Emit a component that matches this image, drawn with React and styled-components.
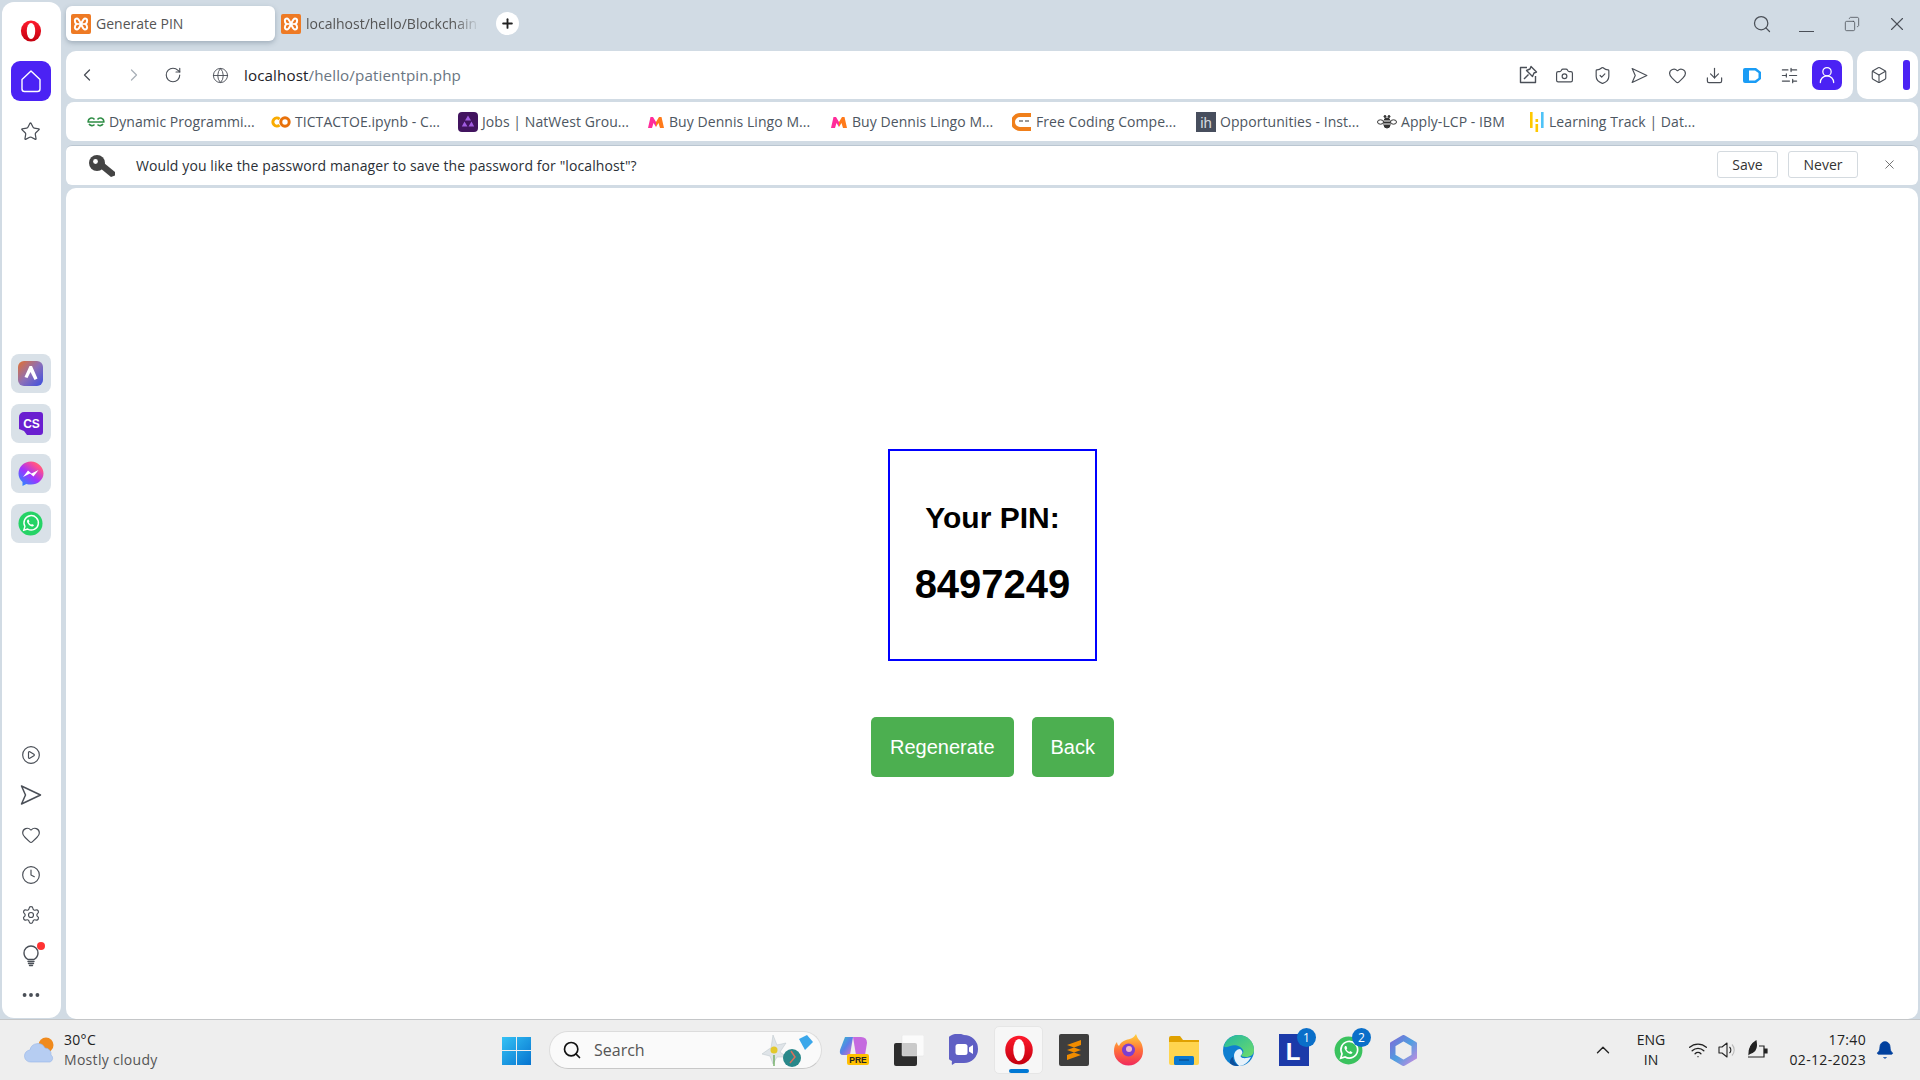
import React from 'react';
import styled, { createGlobalStyle } from 'styled-components';
import {
  Star, CirclePlay, Heart, Clock, Settings, Ellipsis, Search, X, ChevronLeft, ChevronRight,
  RotateCw, Globe, Camera, ShieldCheck, Download, SlidersHorizontal, Box, UserRound, Wifi,
  ChevronUp, Bell, Plus, Copy,
} from 'lucide-react';

const GlobalStyle = createGlobalStyle`
  html, body { margin: 0; padding: 0; }
  body { width: 1920px; height: 1080px; overflow: hidden; font-family: "Open Sans", "Liberation Sans", sans-serif; }
`;

const Screen = styled.div`
  width: 1920px;
  height: 1080px;
  display: flex;
  flex-direction: column;
  background: #d1dbe4;
`;

const Upper = styled.div`
  height: 1019px;
  display: flex;
  flex: none;
`;

const Sidebar = styled.aside`
  width: 59px;
  height: 1016px;
  margin: 2px 5px 0 2px;
  padding-right: 2px;
  box-sizing: border-box;
  background: #fff;
  border-radius: 12px;
  display: flex;
  flex-direction: column;
  align-items: center;
  flex: none;
`;

const LogoSlot = styled.div`
  height: 40px;
  margin-top: 9px;
  margin-bottom: 10px;
  display: flex;
  align-items: center;
`;

const HomeButton = styled.div`
  width: 40px;
  height: 40px;
  border-radius: 9px;
  background: #4b22f4;
  display: flex;
  align-items: center;
  justify-content: center;
  flex: none;
`;

const SideIcon = styled.div`
  height: 40px;
  margin-top: ${p => p.$mt || 0}px;
  display: flex;
  align-items: center;
  justify-content: center;
  color: #4a4f57;
  flex: none;
  position: relative;
`;

const Tiles = styled.div`
  margin-top: 203px;
  display: flex;
  flex-direction: column;
  gap: 11px;
`;

const Tile = styled.div`
  width: 40px;
  height: 39px;
  border-radius: 8px;
  background: #d9e1e8;
  display: flex;
  align-items: center;
  justify-content: center;
`;

const BottomIcons = styled.div`
  margin-top: 192px;
  display: flex;
  flex-direction: column;
`;

const RedDot = styled.span`
  position: absolute;
  top: 7px;
  right: -3px;
  width: 8px;
  height: 8px;
  border-radius: 50%;
  background: #f33;
`;

const Main = styled.main`
  flex: 1;
  min-width: 0;
  display: flex;
  flex-direction: column;
  padding-right: 2px;
`;

const TabStrip = styled.div`
  height: 51px;
  display: flex;
  align-items: flex-start;
  flex: none;
`;

const Tab = styled.div`
  width: ${p => p.$w}px;
  height: 35px;
  margin-top: 6px;
  margin-right: ${p => p.$gap || 0}px;
  padding-left: ${p => p.$pad}px;
  box-sizing: border-box;
  display: flex;
  align-items: center;
  gap: 5px;
  font-size: 14px;
  color: #555;
  background: ${p => (p.$active ? '#fff' : 'transparent')};
  border-radius: 6px;
  box-shadow: ${p => (p.$active ? '0 2px 5px rgba(70,90,110,.35)' : 'none')};
  flex: none;
`;

const TabTitle = styled.span`
  white-space: nowrap;
  overflow: hidden;
  flex: 1;
  ${p => p.$fade && 'mask-image: linear-gradient(to right, #000 85%, transparent 100%);'}
`;

const NewTab = styled.div`
  width: 23px;
  height: 23px;
  margin: 12px 0 0 16px;
  border-radius: 50%;
  background: #fff;
  color: #222;
  display: flex;
  align-items: center;
  justify-content: center;
  flex: none;
`;

const WindowControls = styled.div`
  margin-left: auto;
  margin-right: -1px;
  height: 48px;
  display: flex;
  align-items: center;
  color: #4a4f57;
`;

const WinControl = styled.div`
  width: ${p => p.$w}px;
  display: flex;
  justify-content: center;
`;

const MinimizeLine = styled.span`
  width: 15px;
  height: 1px;
  margin-top: 14px;
  background: #4a4f57;
`;

const RestoreIcon = styled.span`
  display: flex;
  transform: scaleX(-1);
`;

const ToolRow = styled.div`
  height: 48px;
  display: flex;
  gap: 4px;
  flex: none;
`;

const AddressBar = styled.div`
  flex: 1;
  background: #fff;
  border-radius: 10px;
  display: flex;
  align-items: center;
  padding-right: 11px;
  color: #4a4f57;
`;

const NavBtn = styled.div`
  width: ${p => p.$w}px;
  margin-left: ${p => p.$ml || 0}px;
  flex: none;
  display: flex;
  justify-content: center;
  color: ${p => (p.$dim ? '#a9b0b8' : '#4a4f57')};
`;

const Url = styled.div`
  font-size: 15.2px;
  color: #6a7682;
  letter-spacing: 0.1px;
  white-space: nowrap;
  b { font-weight: 400; color: #1e2227; }
`;

const ToolIcons = styled.div`
  margin-left: auto;
  display: flex;
  align-items: center;
`;

const ToolBtn = styled.div`
  width: 37.4px;
  display: flex;
  justify-content: center;
`;

const ProfileBtn = styled.div`
  width: 30px;
  height: 30px;
  margin-left: 4px;
  border-radius: 7px;
  background: #4b22f4;
  display: flex;
  align-items: center;
  justify-content: center;
  color: #fff;
`;

const PinBox = styled.div`
  width: 61px;
  background: #fff;
  border-radius: 10px;
  display: flex;
  align-items: center;
  padding-left: 13px;
  box-sizing: border-box;
  color: #4a4f57;
  flex: none;
`;

const BlueBar = styled.span`
  width: 7px;
  height: 30px;
  border-radius: 3px;
  background: #4b22f4;
  margin-left: 15px;
`;

const BookmarksBar = styled.div`
  height: 39px;
  margin-top: 3px;
  background: #fff;
  border-radius: 8px;
  display: flex;
  align-items: center;
  padding-left: 20px;
  flex: none;
`;

const Bookmark = styled.div`
  width: ${p => p.$w}px;
  flex: none;
  display: flex;
  align-items: center;
  font-size: 14px;
  color: #4d5661;
  white-space: nowrap;
`;

const BookmarkIcon = styled.span`
  width: ${p => p.$w}px;
  display: flex;
  justify-content: center;
  flex: none;
  margin-right: 3px;
`;

const BookmarkText = styled.span`
  letter-spacing: 0.06px;
`;

const InfoBar = styled.div`
  height: 40px;
  margin-top: 4px;
  background: #fff;
  border-top: 1px solid #bac6d1;
  box-sizing: border-box;
  border-radius: 6px;
  display: flex;
  align-items: center;
  padding-left: 23px;
  font-size: 14px;
  color: #2a2f36;
  flex: none;
`;

const InfoText = styled.span`
  margin-left: 21px;
  letter-spacing: 0.1px;
`;

const InfoButton = styled.button`
  height: 27px;
  width: ${p => p.$w}px;
  margin-left: ${p => p.$ml};
  margin-bottom: 2px;
  padding: 0;
  background: #fff;
  border: 1px solid #d4dadf;
  border-radius: 3px;
  font: inherit;
  font-size: 14px;
  color: #333;
`;

const CloseInfo = styled.div`
  margin: 0 21px 2px 24px;
  color: #555;
  display: flex;
`;

const Page = styled.div`
  flex: 1;
  margin-top: 3px;
  background: #fff;
  border-radius: 10px;
  display: flex;
  flex-direction: column;
  align-items: center;
  padding: 261px 0 0 1px;
  font-family: "Liberation Sans", Arial, sans-serif;
`;

const PinCard = styled.div`
  width: 209px;
  height: 212px;
  box-sizing: border-box;
  border: 2px solid #0000ff;
  display: flex;
  flex-direction: column;
  align-items: center;
  color: #000;
  font-weight: 700;
`;

const PinLabel = styled.div`
  margin-top: 50px;
  font-size: 30px;
  line-height: 34px;
`;

const PinValue = styled.div`
  margin-top: 26px;
  font-size: 40px;
  line-height: 46px;
`;

const ButtonRow = styled.div`
  margin-top: 56px;
  display: flex;
  gap: 18px;
`;

const GreenButton = styled.button`
  height: 60px;
  padding: 0 19px;
  background: #4caf50;
  color: #fff;
  border: 0;
  border-radius: 5px;
  font: inherit;
  font-size: 20px;
`;

const Taskbar = styled.footer`
  height: 61px;
  flex: none;
  background: #eeeeee;
  border-top: 1px solid #c4c6c8;
  box-sizing: border-box;
  display: flex;
  align-items: center;
  font-size: 14px;
  color: #222;
`;

const Weather = styled.div`
  width: 502px;
  flex: none;
  box-sizing: border-box;
  padding-left: 24px;
  display: flex;
  align-items: center;
  gap: 8px;
`;

const WeatherText = styled.div`
  line-height: 20px;
  letter-spacing: 0.3px;
  div + div { color: #555; }
`;

const StartSlot = styled.div`
  flex: none;
  display: flex;
`;

const SearchBox = styled.div`
  width: 273px;
  height: 38px;
  margin-left: 18px;
  box-sizing: border-box;
  background: #fafafa;
  border: 1px solid #dcdcdc;
  border-bottom-color: #c8c8c8;
  border-radius: 19px;
  display: flex;
  align-items: center;
  padding-left: 12px;
  font-size: 16px;
  color: #555;
  flex: none;
`;

const SearchLabel = styled.span`
  margin-left: 12px;
`;

const SearchArt = styled.span`
  margin-left: auto;
  margin-right: 4px;
  display: flex;
`;

const Pinned = styled.div`
  margin-left: 4px;
  display: flex;
  flex: none;
`;

const PinnedApp = styled.div`
  width: 55px;
  height: 48px;
  display: flex;
  align-items: center;
  justify-content: center;
  position: relative;
  box-sizing: border-box;
  ${p => p.$active && 'background: #f7f7f7; border: 1px solid #e6e6e6; border-radius: 5px; width: 49px; margin: 0 3px;'}
`;

const RunIndicator = styled.span`
  position: absolute;
  bottom: 0;
  left: 14px;
  width: 20px;
  height: 4px;
  border-radius: 2px;
  background: #0078d4;
`;

const CountBadge = styled.span`
  position: absolute;
  top: 2px;
  right: 5px;
  width: 19px;
  height: 19px;
  border-radius: 50%;
  background: #0a6fc9;
  color: #fff;
  font-size: 12px;
  line-height: 19px;
  text-align: center;
`;

const Tray = styled.div`
  margin-left: auto;
  display: flex;
  align-items: center;
  padding-right: 16px;
`;

const TrayIcon = styled.div`
  width: ${p => p.$w}px;
  display: flex;
  justify-content: center;
  color: #222;
`;

const Lang = styled.div`
  width: 50px;
  margin: 0 7px 0 8px;
  text-align: center;
  line-height: 20px;
`;

const Clocks = styled.div`
  width: 93px;
  text-align: right;
  line-height: 20px;
  letter-spacing: 0.35px;
`;

const BellSlot = styled.div`
  width: 38px;
  display: flex;
  justify-content: center;
  color: #00409e;
`;

const OperaLogo = ({ size = 22 }) => (
  <svg width={size} height={size} viewBox="0 0 24 24">
    <defs>
      <linearGradient id="operaRed" x1="0" y1="0" x2="0" y2="1">
        <stop offset="0" stopColor="#ff1b2d" />
        <stop offset="1" stopColor="#c3000f" />
      </linearGradient>
    </defs>
    <ellipse cx="12" cy="12" rx="11" ry="11.5" fill="url(#operaRed)" />
    <ellipse cx="12" cy="12" rx="4.6" ry="8.8" fill="#fff" />
  </svg>
);

const XamppIcon = () => (
  <svg width="20" height="20" viewBox="0 0 20 20">
    <rect width="20" height="20" rx="2" fill="#ee7a24" />
    <path d="M6 4.5c-2.5 0-3 3.5-.5 5.5C3 12 3.500 15.500 6 15.500c2 0 2.500-3 4-5.500 1.500 2.500 2 5.500 4 5.500 2.500 0 3-3.500.5-5.500 2.500-2 2-5.500-.5-5.500-2 0-2.500 3-4 5.500C8.500 7.500 8 4.500 6 4.500z" fill="none" stroke="#fff" strokeWidth="2" />
    <path d="M6 10h8" stroke="#fff" strokeWidth="1.600" />
  </svg>
);

const HomeGlyph = () => (
  <svg width="22" height="24" viewBox="0 0 22 24" fill="none" stroke="#fff" strokeWidth="1.400">
    <path d="M2 10.500 11 2l9 8.500V20a2.500 2.500 0 0 1-2.500 2.500h-13A2.500 2.500 0 0 1 2 20z" strokeLinejoin="round" />
  </svg>
);

const SendGlyph = ({ size = 20 }) => (
  <svg width={size} height={size} viewBox="0 0 22 22" fill="none" stroke="currentColor" strokeWidth="1.500" strokeLinejoin="round">
    <path d="M1.500 2 20.500 11 1.500 20 5.500 11z" />
  </svg>
);

const PinNoteGlyph = () => (
  <svg width="20" height="20" viewBox="0 0 20 20" fill="none" stroke="currentColor" strokeWidth="1.400" strokeLinejoin="round">
    <path d="M9 2.500H2.500v15h15V11" />
    <path d="M13 1.500 18.500 7l-2.500 1-1.500 3.500-6-6L12 4z" />
    <path d="M10.500 9.500 6 14" />
  </svg>
);

const BulbGlyph = () => (
  <svg width="20" height="24" viewBox="0 0 20 24" fill="none" stroke="currentColor" strokeWidth="1.400" strokeLinecap="round">
    <path d="M7 16.500C4.500 15 3 13 3 10a7 7 0 0 1 14 0c0 3-1.500 5-4 6.500z" />
    <path d="M7 18.500h6M7.500 20.500h5M8.500 22.500h3" />
  </svg>
);

const ArcTile = () => (
  <svg width="25" height="25" viewBox="0 0 25 25">
    <defs>
      <linearGradient id="arcBg" x1="0" y1="0" x2="1" y2="1">
        <stop offset="0" stopColor="#e3702f" />
        <stop offset=".5" stopColor="#8c6fb8" />
        <stop offset="1" stopColor="#3b4fe0" />
      </linearGradient>
    </defs>
    <rect width="25" height="25" rx="6" fill="url(#arcBg)" />
    <path d="M11.500 5 6.500 16l3 1 3-6 4 8 3-1.500L14 5z" fill="#fff" />
  </svg>
);

const CsTile = () => (
  <svg width="26" height="26" viewBox="0 0 26 26">
    <path d="M6 1h16a3 3 0 0 1 3 3v17a3 3 0 0 1-3 3H9l-3-4-5-2V6a5 5 0 0 1 5-5z" fill="#6a1fd0" />
    <text x="13.500" y="17" fontFamily="Liberation Sans" fontWeight="700" fontSize="12" fill="#fff" textAnchor="middle">CS</text>
  </svg>
);

const MessengerTile = () => (
  <svg width="26" height="26" viewBox="0 0 26 26">
    <defs>
      <linearGradient id="msgr" x1="0.100" y1="1" x2="0.900" y2="0">
        <stop offset="0" stopColor="#1e90ff" />
        <stop offset=".45" stopColor="#a033ff" />
        <stop offset=".8" stopColor="#ff4f8f" />
        <stop offset="1" stopColor="#ff7a59" />
      </linearGradient>
    </defs>
    <path d="M13 .5C6 .5 .5 5.700 .5 12.400c0 3.500 1.500 6.500 4 8.600V25l3.800-2.100c1.500.4 3 .6 4.700.6 7 0 12.500-5.200 12.500-11.100S20 .5 13 .5z" fill="url(#msgr)" />
    <path d="M5 16 10 9.500l3.500 3 7-3.500-5 6.500-3.500-3z" fill="#fff" />
  </svg>
);

const WhatsappGlyph = ({ size = 25, fill = '#25d366' }) => (
  <svg width={size} height={size} viewBox="0 0 26 26">
    <circle cx="13" cy="13" r="12.500" fill={fill} />
    <path d="M6 20l1.200-4a7.500 7.500 0 1 1 2.800 2.800z" fill="none" stroke="#fff" strokeWidth="1.500" />
    <path d="M10 9c-1 1-.8 2.500.5 4.300 1.500 2 3.300 3 4.700 2.700.8-.2 1.400-.8 1.300-1.500l-2-1-.8.8c-1-.4-2-1.400-2.500-2.500l.7-.8-.9-2.100z" fill="#fff" />
  </svg>
);

const GfgIcon = () => (
  <svg width="18" height="12" viewBox="0 0 18 12" fill="none" stroke="#2f8d46" strokeWidth="1.600">
    <path d="M9 6H1.200A3.500 3.500 0 0 1 7.500 3.500M9 6h7.800a3.500 3.500 0 0 0-6.300-2.500M7.500 8.500A3.500 3.500 0 0 1 2 8M10.500 8.500A3.500 3.500 0 0 0 16 8" />
  </svg>
);

const ColabIcon = () => (
  <svg width="20" height="12" viewBox="0 0 20 12" fill="none" strokeWidth="3">
    <path d="M8.500 3a4 4 0 1 0 0 6" stroke="#f9ab00" />
    <circle cx="14" cy="6" r="4.200" stroke="#e8710a" />
  </svg>
);

const NatwestIcon = () => (
  <svg width="20" height="20" viewBox="0 0 20 20">
    <rect width="20" height="20" rx="4" fill="#42145f" />
    <path d="M10 3.500 13 8.500H7zM6.500 9.500 9.500 14.500H3.800zM13.500 9.500 16.200 14.500H10.500z" fill="#a15ce0" />
  </svg>
);

const MyntraIcon = () => (
  <svg width="16" height="12" viewBox="0 0 16 12">
    <path d="M0 12 2.500 1H5l3 5v5L5.500 7 4 12z" fill="#ff2d9b" />
    <path d="M16 12 13.500 1H11L8 6v5l2.500-4L12 12z" fill="#ff7a1a" />
  </svg>
);

const CodingNinjaIcon = () => (
  <svg width="20" height="20" viewBox="0 0 20 20">
    <path d="M8 1h11v4H8a5 5 0 0 0 0 10h11v4H8A9 9 0 0 1 8 1z" fill="#f07f1a" />
    <rect x="5" y="7" width="14" height="6" fill="#fff" />
    <path d="M7 9h4M13 9h4" stroke="#333" strokeWidth="1.200" />
  </svg>
);

const IhIcon = () => (
  <svg width="20" height="20" viewBox="0 0 20 20">
    <rect width="20" height="20" fill="#474e5d" />
    <text x="10" y="16" fontFamily="Liberation Sans" fontSize="15" fill="#d5d8de" textAnchor="middle">ih</text>
  </svg>
);

const BeeIcon = () => (
  <svg width="20" height="14" viewBox="0 0 20 14" fill="none" stroke="#333" strokeWidth="1">
    <ellipse cx="3.500" cy="7" rx="3" ry="2.200" />
    <ellipse cx="16.500" cy="7" rx="3" ry="2.200" />
    <rect x="7" y="3" width="6" height="10" rx="3" fill="#333" />
    <path d="M7 6h6M7 9h6" stroke="#fff" />
    <circle cx="8" cy="1.500" r="1" fill="#333" />
    <circle cx="12" cy="1.500" r="1" fill="#333" />
  </svg>
);

const DataLearnIcon = () => (
  <svg width="14" height="20" viewBox="0 0 14 20">
    <rect x="0" y="0" width="2.600" height="16" fill="#ffc800" />
    <rect x="5.500" y="7" width="2.600" height="3" fill="#ffc800" />
    <rect x="5.500" y="12" width="2.600" height="8" fill="#ffc800" />
    <rect x="11" y="0" width="2.600" height="16" fill="#4fc3f7" />
  </svg>
);

const KeyIcon = () => (
  <svg width="26" height="22" viewBox="0 0 26 22">
    <circle cx="8" cy="8" r="8" fill="#444" />
    <circle cx="6.500" cy="6.500" r="2.400" fill="#fff" />
    <path d="M11 13 22 22l4-1.500V17L15 8z" fill="#444" />
  </svg>
);

const PillIcon = () => (
  <svg width="18" height="15" viewBox="0 0 18 15">
    <path d="M2 0h11l5 4v7l-5 4H2a2 2 0 0 1-2-2V2a2 2 0 0 1 2-2z" fill="#1a9cf5" />
    <path d="M6 2.500h6l3.500 2.500v5L12 12.500H6z" fill="#fff" />
  </svg>
);

const CloudSun = () => (
  <svg width="32" height="26" viewBox="0 0 32 26">
    <circle cx="22" cy="8" r="7.500" fill="#f08a1d" />
    <path d="M7 25a6 6 0 0 1-1-12 8 8 0 0 1 15-2 6 6 0 0 1 6 7 4 4 0 0 1-1 7z" fill="#b6cdf2" stroke="#93b4e8" strokeWidth=".6" />
  </svg>
);

const StartIcon = () => (
  <svg width="29" height="29" viewBox="0 0 29 29">
    <defs>
      <linearGradient id="win" x1="0" y1="0" x2="1" y2="1">
        <stop offset="0" stopColor="#34c2f5" />
        <stop offset="1" stopColor="#0673cf" />
      </linearGradient>
    </defs>
    <path d="M0 1h14v13H0zM15 1h14v13H15zM0 15h14v14H0zM15 15h14v14H15z" fill="url(#win)" />
  </svg>
);

const SearchDecor = () => (
  <svg width="58" height="34" viewBox="0 0 58 34">
    <path d="M12 15 14 2l4 10 9-2-6 9 7 5-10 0-4 7-3-8-8-2 7-5z" fill="#dfe4e8" stroke="#b8c2c8" strokeWidth=".5" />
    <circle cx="15" cy="17" r="3.500" fill="#e3c82c" />
    <path d="M15 22v11" stroke="#5aa34a" strokeWidth="1.200" />
    <ellipse cx="33" cy="25" rx="9" ry="9" fill="#29888a" />
    <path d="M32 18l4 6-5 6" stroke="#d8705c" strokeWidth="1.500" fill="none" />
    <path d="M40 6 48 2l6 7-8 8z" fill="#3ba7ea" />
  </svg>
);

const CopilotPre = () => (
  <svg width="30" height="32" viewBox="0 0 30 32">
    <defs>
      <linearGradient id="cpA" x1="0" y1="0" x2="1" y2="1">
        <stop offset="0" stopColor="#2fc4c8" />
        <stop offset=".5" stopColor="#5a7fe8" />
        <stop offset="1" stopColor="#e36fc5" />
      </linearGradient>
    </defs>
    <path d="M6 3h8l-3 18H4q-4 0-3-5z" fill="url(#cpA)" />
    <path d="M14 3h8q6 0 6 6l-2 12h-9z" fill="#c56adf" />
    <rect x="8" y="20" width="22" height="11" rx="2" fill="#ffc000" />
    <text x="19" y="29" fontFamily="Liberation Sans" fontWeight="700" fontSize="8.500" fill="#222" textAnchor="middle">PRE</text>
  </svg>
);

const Overlap = () => (
  <svg width="30" height="31" viewBox="0 0 30 31">
    <rect y="8" width="23" height="23" rx="2" fill="#2d2d2d" />
    <rect x="8" y="0" width="22" height="21" rx="1" fill="#fff" fillOpacity=".75" stroke="#e0e0e0" strokeWidth=".5" />
  </svg>
);

const MeetIcon = () => (
  <svg width="30" height="32" viewBox="0 0 30 32">
    <path d="M15 1a14 14 0 0 1 0 28H6l-3 2c-.5-2 0-3.500 0-4A14 14 0 0 1 15 1z" fill="#5f5fc4" />
    <rect x="6.500" y="10" width="12" height="11" rx="2.500" fill="#fff" />
    <path d="M20 13.500 24 11v9l-4-2.500z" fill="#fff" />
  </svg>
);

const SublimeIcon = () => (
  <svg width="30" height="32" viewBox="0 0 30 32">
    <rect width="30" height="32" rx="2" fill="#3e3e3e" />
    <path d="M8 11 22 6v5L8 16zM22 21 8 26v-5l14-5zM8 16l14 5v-5L8 11z" fill="#f08c00" />
  </svg>
);

const FirefoxIcon = () => (
  <svg width="29" height="32" viewBox="0 0 29 32">
    <defs>
      <linearGradient id="ffx" x1="0.500" y1="0" x2="0.500" y2="1">
        <stop offset="0" stopColor="#ffd43a" />
        <stop offset=".5" stopColor="#ff7139" />
        <stop offset="1" stopColor="#f0295c" />
      </linearGradient>
    </defs>
    <path d="M22 0c1 3 2 5 4 7 3 4 3 9 3 10a14.500 14.500 0 0 1-29 0c0-4 1-7 3-9 0 2 1 3 2 4 1-3 4-5 7-6 4-1 8-2 10-6z" fill="url(#ffx)" />
    <circle cx="14.500" cy="16" r="6.500" fill="#7b3fd0" />
    <circle cx="15" cy="15" r="3" fill="#f7b6c8" />
  </svg>
);

const FolderIcon = () => (
  <svg width="30" height="29" viewBox="0 0 30 29">
    <path d="M0 2a2 2 0 0 1 2-2h9l3 4h16v8H0z" fill="#e0a100" />
    <path d="M0 6h30v21a2 2 0 0 1-2 2H2a2 2 0 0 1-2-2z" fill="#ffd54f" />
    <rect x="5" y="20" width="20" height="9" rx="1.500" fill="#0a78d0" />
    <path d="M10 24h10" stroke="#063f7a" strokeWidth="1" />
  </svg>
);

const EdgeIcon = () => (
  <svg width="31" height="31" viewBox="0 0 31 31">
    <defs>
      <linearGradient id="edgeTop" x1="0" y1="0" x2="1" y2="1">
        <stop offset="0" stopColor="#22b8a0" />
        <stop offset="1" stopColor="#6fdc6a" />
      </linearGradient>
    </defs>
    <circle cx="15.500" cy="15.500" r="15.500" fill="#0f7fd0" />
    <path d="M1 11C3 4 9 0 15.500 0 24 0 31 6 31 15c0 5-4 7-8 7-3 0-5-1-5-2 2-1 3-3 2-5-2-4-8-6-13-4-3 1-5 2-6 0z" fill="url(#edgeTop)" />
    <path d="M11 21c0-4 3-7 6-7 2 1 3 3 2 5-1 1-2 2-1 3 2 2 6 1 10 0-3 6-8 9-12 9-3-3-5-6-5-10z" fill="#fff" fillOpacity=".9" />
    <path d="M10 22c0 4 2 7 6 9-3 0-6 0-8-2-2-1-1-6 2-7z" fill="#0b4f9c" />
  </svg>
);

const LIcon = () => (
  <svg width="30" height="32" viewBox="0 0 30 32">
    <rect width="30" height="32" fill="#1c3aa9" />
    <text x="14" y="26" fontFamily="Liberation Sans" fontWeight="700" fontSize="24" fill="#fff" textAnchor="middle">L</text>
  </svg>
);

const M365Icon = () => (
  <svg width="27" height="31" viewBox="0 0 27 31">
    <defs>
      <linearGradient id="m365" x1="0" y1="0" x2="1" y2="1">
        <stop offset="0" stopColor="#7a6fd8" />
        <stop offset=".5" stopColor="#4f9fe0" />
        <stop offset="1" stopColor="#c08be0" />
      </linearGradient>
    </defs>
    <path d="M13.500 3 24.500 9.500v12L13.500 28 2.500 21.500v-12z" fill="none" stroke="url(#m365)" strokeWidth="6" strokeLinejoin="round" />
  </svg>
);

const BatteryLeaf = () => (
  <svg width="22" height="20" viewBox="0 0 22 20" fill="none" stroke="#222" strokeWidth="1.200">
    <path d="M1 17h16V6h-5" />
    <path d="M17.500 9h2.500v4h-2.500z" fill="#222" />
    <path d="M2 14c0-6 2-10 7-13 1 5 0 9-3 11-1 .8-3 1-4 2z" fill="#222" />
  </svg>
);

const SpeakerIcon = () => (
  <svg width="22" height="20" viewBox="0 0 22 20" fill="none" stroke="#222" strokeWidth="1.100" strokeLinejoin="round">
    <path d="M2 7h3l5-4v14l-5-4H2z" />
    <path d="M12.500 7a4 4 0 0 1 0 6" />
    <path d="M15 4.500a8 8 0 0 1 0 11" stroke="#bbb" />
  </svg>
);

const bookmarks = [
  { w: 184, iw: 20, icon: <GfgIcon />, label: 'Dynamic Programmi...' },
  { w: 187, iw: 22, icon: <ColabIcon />, label: 'TICTACTOE.ipynb - C...' },
  { w: 189, iw: 22, icon: <NatwestIcon />, label: 'Jobs | NatWest Grou...' },
  { w: 183, iw: 20, icon: <MyntraIcon />, label: 'Buy Dennis Lingo M...' },
  { w: 182, iw: 20, icon: <MyntraIcon />, label: 'Buy Dennis Lingo M...' },
  { w: 184, iw: 22, icon: <CodingNinjaIcon />, label: 'Free Coding Compe...' },
  { w: 181, iw: 22, icon: <IhIcon />, label: 'Opportunities - Inst...' },
  { w: 152, iw: 22, icon: <BeeIcon />, label: 'Apply-LCP - IBM' },
  { w: 180, iw: 18, icon: <DataLearnIcon />, label: 'Learning Track | Dat...' },
];

const toolIcons = [
  <PinNoteGlyph key="snap" />,
  <Camera size={19} strokeWidth={1.5} key="cam" />,
  <ShieldCheck size={19} strokeWidth={1.5} key="shield" />,
  <SendGlyph size={17} key="send" />,
  <Heart size={19} strokeWidth={1.5} key="heart" />,
  <Download size={19} strokeWidth={1.5} key="dl" />,
  <PillIcon key="pill" />,
  <SlidersHorizontal size={19} strokeWidth={1.5} key="sliders" />,
];

const pinned = [
  { icon: <CopilotPre /> },
  { icon: <Overlap /> },
  { icon: <MeetIcon /> },
  { icon: <OperaLogo size={30} />, active: true },
  { icon: <SublimeIcon /> },
  { icon: <FirefoxIcon /> },
  { icon: <FolderIcon /> },
  { icon: <EdgeIcon /> },
  { icon: <LIcon />, badge: 1 },
  { icon: <WhatsappGlyph size={29} fill="#3ac25e" />, badge: 2 },
  { icon: <M365Icon /> },
];

export default function App() {
  return (
    <Screen>
      <GlobalStyle />
      <Upper>
        <Sidebar>
          <LogoSlot><OperaLogo /></LogoSlot>
          <HomeButton><HomeGlyph /></HomeButton>
          <SideIcon $mt={10}><Star size={21} strokeWidth={1.4} /></SideIcon>
          <Tiles>
            <Tile><ArcTile /></Tile>
            <Tile><CsTile /></Tile>
            <Tile><MessengerTile /></Tile>
            <Tile><WhatsappGlyph /></Tile>
          </Tiles>
          <BottomIcons>
            <SideIcon><CirclePlay size={20} strokeWidth={1.4} /></SideIcon>
            <SideIcon><SendGlyph size={22} /></SideIcon>
            <SideIcon><Heart size={20} strokeWidth={1.4} /></SideIcon>
            <SideIcon><Clock size={20} strokeWidth={1.4} /></SideIcon>
            <SideIcon><Settings size={20} strokeWidth={1.4} /></SideIcon>
            <SideIcon><BulbGlyph /><RedDot /></SideIcon>
            <SideIcon><Ellipsis size={22} strokeWidth={2.2} /></SideIcon>
          </BottomIcons>
        </Sidebar>
        <Main>
          <TabStrip>
            <Tab $active $w={209} $pad={5} $gap={6}>
              <XamppIcon />
              <TabTitle>Generate PIN</TabTitle>
            </Tab>
            <Tab $w={199} $pad={0}>
              <XamppIcon />
              <TabTitle $fade>localhost/hello/Blockchain</TabTitle>
            </Tab>
            <NewTab><Plus size={15} strokeWidth={3} /></NewTab>
            <WindowControls>
              <WinControl $w={45}><Search size={20} strokeWidth={1.5} /></WinControl>
              <WinControl $w={45}><MinimizeLine /></WinControl>
              <WinControl $w={45}><RestoreIcon><Copy size={16} strokeWidth={1.2} /></RestoreIcon></WinControl>
              <WinControl $w={45}><X size={22} strokeWidth={1.2} /></WinControl>
            </WindowControls>
          </TabStrip>
          <ToolRow>
            <AddressBar>
              <NavBtn $w={42}><ChevronLeft size={20} strokeWidth={1.5} /></NavBtn>
              <NavBtn $w={52} $dim><ChevronRight size={20} strokeWidth={1.5} /></NavBtn>
              <NavBtn $w={26}><RotateCw size={18} strokeWidth={1.5} /></NavBtn>
              <NavBtn $w={48} $ml={10}><Globe size={17} strokeWidth={1.3} /></NavBtn>
              <Url><b>localhost</b>/hello/patientpin.php</Url>
              <ToolIcons>
                {toolIcons.map(icon => <ToolBtn key={icon.key}>{icon}</ToolBtn>)}
                <ProfileBtn><UserRound size={20} strokeWidth={1.5} /></ProfileBtn>
              </ToolIcons>
            </AddressBar>
            <PinBox>
              <Box size={18} strokeWidth={1.5} />
              <BlueBar />
            </PinBox>
          </ToolRow>
          <BookmarksBar>
            {bookmarks.map((b, i) => (
              <Bookmark $w={b.w} key={i}>
                <BookmarkIcon $w={b.iw}>{b.icon}</BookmarkIcon>
                <BookmarkText>{b.label}</BookmarkText>
              </Bookmark>
            ))}
          </BookmarksBar>
          <InfoBar>
            <KeyIcon />
            <InfoText>Would you like the password manager to save the password for "localhost"?</InfoText>
            <InfoButton $w={61} $ml="auto">Save</InfoButton>
            <InfoButton $w={70} $ml="10px">Never</InfoButton>
            <CloseInfo><X size={15} strokeWidth={1.3} /></CloseInfo>
          </InfoBar>
          <Page>
            <PinCard>
              <PinLabel>Your PIN:</PinLabel>
              <PinValue>8497249</PinValue>
            </PinCard>
            <ButtonRow>
              <GreenButton>Regenerate</GreenButton>
              <GreenButton>Back</GreenButton>
            </ButtonRow>
          </Page>
        </Main>
      </Upper>
      <Taskbar>
        <Weather>
          <CloudSun />
          <WeatherText>
            <div>30°C</div>
            <div>Mostly cloudy</div>
          </WeatherText>
        </Weather>
        <StartSlot><StartIcon /></StartSlot>
        <SearchBox>
          <Search size={20} strokeWidth={2} color="#111" />
          <SearchLabel>Search</SearchLabel>
          <SearchArt><SearchDecor /></SearchArt>
        </SearchBox>
        <Pinned>
          {pinned.map((app, i) => (
            <PinnedApp $active={app.active} key={i}>
              {app.icon}
              {app.active && <RunIndicator />}
              {app.badge && <CountBadge>{app.badge}</CountBadge>}
            </PinnedApp>
          ))}
        </Pinned>
        <Tray>
          <TrayIcon $w={30}><ChevronUp size={22} strokeWidth={1.5} /></TrayIcon>
          <Lang>ENG<br />IN</Lang>
          <TrayIcon $w={30}><Wifi size={20} strokeWidth={1.6} /></TrayIcon>
          <TrayIcon $w={30}><SpeakerIcon /></TrayIcon>
          <TrayIcon $w={30}><BatteryLeaf /></TrayIcon>
          <Clocks>17:40<br />02-12-2023</Clocks>
          <BellSlot><Bell size={20} fill="#00409e" strokeWidth={1} /></BellSlot>
        </Tray>
      </Taskbar>
    </Screen>
  );
}
